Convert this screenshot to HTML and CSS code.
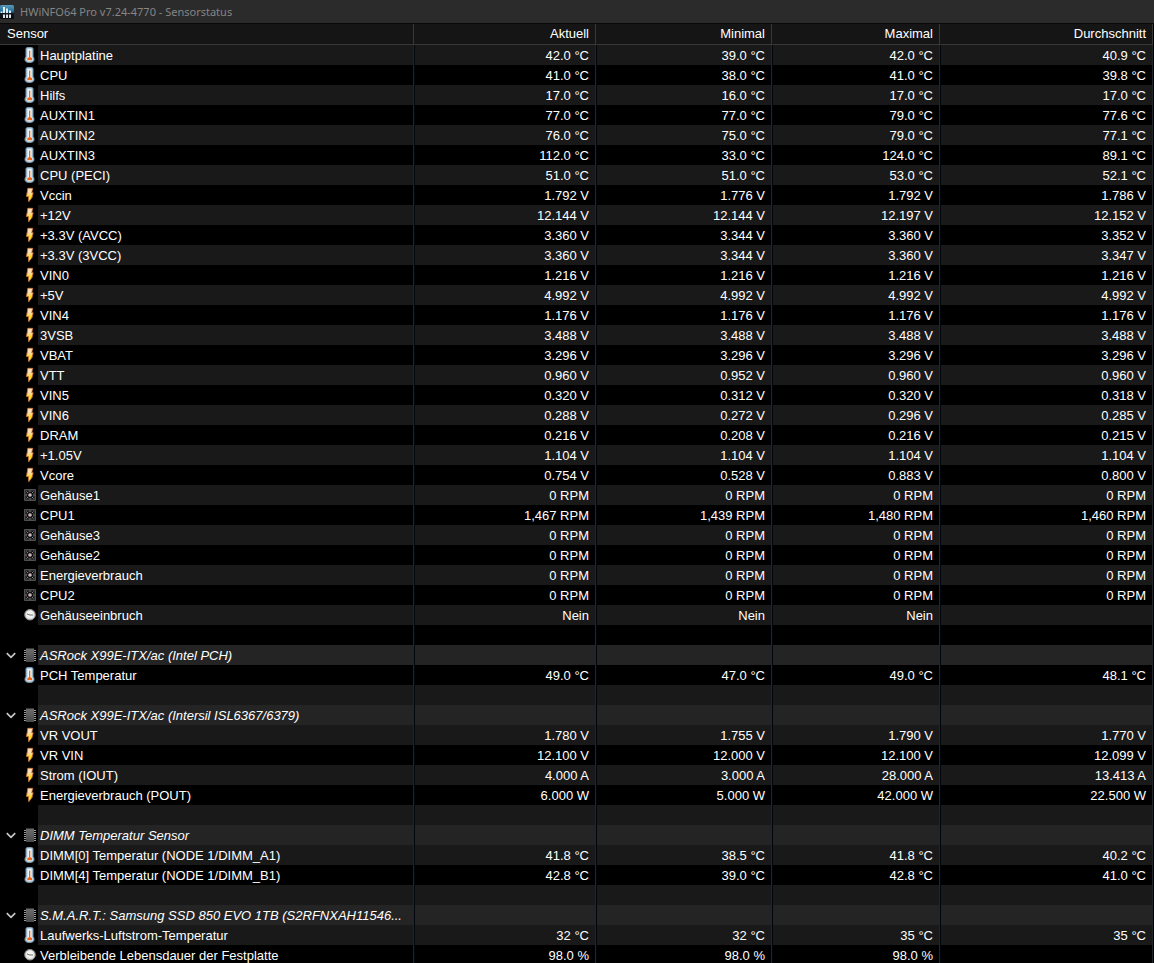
FILE: index.html
```html
<!DOCTYPE html>
<html lang="de">
<head>
<meta charset="utf-8">
<title>HWiNFO64 Pro v7.24-4770 - Sensorstatus</title>
<link rel="stylesheet" href="styles.css">
</head>
<body>
<svg class="defs" aria-hidden="true">
<defs>
<linearGradient id="boltfill" x1="0" y1="0" x2="0" y2="1"><stop offset="0" stop-color="#ffe2c0"/><stop offset=".4" stop-color="#ffd9a0"/><stop offset=".6" stop-color="#ffd92a"/><stop offset=".8" stop-color="#fff010"/><stop offset="1" stop-color="#f0a010"/></linearGradient>
<linearGradient id="chipfill" x1="0" y1="0" x2="0" y2="1"><stop offset="0" stop-color="#6e6e6e"/><stop offset="1" stop-color="#484848"/></linearGradient>
<linearGradient id="logofill" x1="0" y1="0" x2="0" y2="1"><stop offset="0" stop-color="#5a9cba"/><stop offset=".5" stop-color="#1b6a98"/><stop offset=".58" stop-color="#101a22"/><stop offset="1" stop-color="#05080b"/></linearGradient>
<symbol id="temp" viewBox="0 0 16 16"><path d="M4 2Q4 .5 5.500 .5H9.500Q11 .5 11 2V9.500Q12 10.500 12 12.500Q12 15.500 7.500 15.500T3 12.500Q3 10.500 4 9.500Z" fill="#a9cde4" stroke="#7f98a8"/><path d="M5.500 2H9.500V10.300Q10.500 11 10.500 12.500Q10 14.300 7.500 14.300T4.500 12.500Q4.500 11 5.500 10.300Z" fill="#eef8ff"/><path d="M7 3.500H8.300V10.200L10 11V13.300H5.300V11L7 10.200Z" fill="#f7640f"/></symbol>
<symbol id="bolt" viewBox="0 0 16 16"><path d="M5.800 1.300H10.700L9.700 5.800H11.200L10 10H10.300L6.700 14.800L6.500 9.500H4.400L5.300 5Z" fill="url(#boltfill)" stroke="#d07838" stroke-width=".8"/></symbol>
<symbol id="fan" viewBox="0 0 16 16"><path d="M2.500 2.500H13.500V13.500H2.500Z" fill="#303030" stroke="#505050"/><path d="M8 3V13M3 8H13M4.500 4.500L11.500 11.500M11.500 4.500L4.500 11.500" stroke="#111" stroke-width="2"/><path d="M8 3V5M8 11V13M3 8H5M11 8H13M4.500 4.500L6 6M10 10L11.500 11.500M11.500 4.500L10 6M6 10L4.500 11.500" stroke="#858585"/><circle cx="8" cy="8" r="1.800" fill="#c9b5b5"/></symbol>
<symbol id="clock" viewBox="0 0 16 16"><circle cx="8" cy="7.700" r="5.300" fill="#d9d9d7" stroke="#8c8c8c"/><circle cx="8" cy="7.500" r="3.800" fill="#f1f1ef"/><path d="M5 7L8 8H11" fill="none" stroke="#77706e"/></symbol>
<symbol id="chip" viewBox="0 0 16 16"><path d="M2 3.500H14M2 5.500H14M2 7.500H14M2 9.500H14M2 11.500H14M2 13.500H14" stroke="#9a9a9a" stroke-width="1"/><path d="M4 1.500H12V15H4Z" fill="url(#chipfill)"/></symbol>
</defs>
</svg>
<main class="window">
<header class="titlebar">
<svg class="logo" viewBox="0 0 14 14" aria-hidden="true"><rect width="14" height="14" rx="1.500" fill="url(#logofill)"/><path d="M4 2V8M7 3.500V8M10 5.500V8M1.500 6.500V8M4 9.500V13M7 9.500V13M10 9.500V13" stroke="#f2fbff" stroke-width="1.800"/></svg>
<h1 class="caption">HWiNFO64 Pro v7.24-4770 - Sensorstatus</h1>
</header>
<table class="sensors">
<colgroup><col class="c-icon"><col><col class="c-current"><col class="c-min"><col class="c-max"><col class="c-avg"></colgroup>
<thead><tr><th colspan="2" class="first">Sensor</th><th>Aktuell</th><th>Minimal</th><th>Maximal</th><th>Durchschnitt</th></tr></thead>
<tbody>
<tr><td><svg class="icon"><use href="#temp"/></svg></td><td>Hauptplatine</td><td>42.0 °C</td><td>39.0 °C</td><td>42.0 °C</td><td>40.9 °C</td></tr>
<tr><td><svg class="icon"><use href="#temp"/></svg></td><td>CPU</td><td>41.0 °C</td><td>38.0 °C</td><td>41.0 °C</td><td>39.8 °C</td></tr>
<tr><td><svg class="icon"><use href="#temp"/></svg></td><td>Hilfs</td><td>17.0 °C</td><td>16.0 °C</td><td>17.0 °C</td><td>17.0 °C</td></tr>
<tr><td><svg class="icon"><use href="#temp"/></svg></td><td>AUXTIN1</td><td>77.0 °C</td><td>77.0 °C</td><td>79.0 °C</td><td>77.6 °C</td></tr>
<tr><td><svg class="icon"><use href="#temp"/></svg></td><td>AUXTIN2</td><td>76.0 °C</td><td>75.0 °C</td><td>79.0 °C</td><td>77.1 °C</td></tr>
<tr><td><svg class="icon"><use href="#temp"/></svg></td><td>AUXTIN3</td><td>112.0 °C</td><td>33.0 °C</td><td>124.0 °C</td><td>89.1 °C</td></tr>
<tr><td><svg class="icon"><use href="#temp"/></svg></td><td>CPU (PECI)</td><td>51.0 °C</td><td>51.0 °C</td><td>53.0 °C</td><td>52.1 °C</td></tr>
<tr><td><svg class="icon"><use href="#bolt"/></svg></td><td>Vccin</td><td>1.792 V</td><td>1.776 V</td><td>1.792 V</td><td>1.786 V</td></tr>
<tr><td><svg class="icon"><use href="#bolt"/></svg></td><td>+12V</td><td>12.144 V</td><td>12.144 V</td><td>12.197 V</td><td>12.152 V</td></tr>
<tr><td><svg class="icon"><use href="#bolt"/></svg></td><td>+3.3V (AVCC)</td><td>3.360 V</td><td>3.344 V</td><td>3.360 V</td><td>3.352 V</td></tr>
<tr><td><svg class="icon"><use href="#bolt"/></svg></td><td>+3.3V (3VCC)</td><td>3.360 V</td><td>3.344 V</td><td>3.360 V</td><td>3.347 V</td></tr>
<tr><td><svg class="icon"><use href="#bolt"/></svg></td><td>VIN0</td><td>1.216 V</td><td>1.216 V</td><td>1.216 V</td><td>1.216 V</td></tr>
<tr><td><svg class="icon"><use href="#bolt"/></svg></td><td>+5V</td><td>4.992 V</td><td>4.992 V</td><td>4.992 V</td><td>4.992 V</td></tr>
<tr><td><svg class="icon"><use href="#bolt"/></svg></td><td>VIN4</td><td>1.176 V</td><td>1.176 V</td><td>1.176 V</td><td>1.176 V</td></tr>
<tr><td><svg class="icon"><use href="#bolt"/></svg></td><td>3VSB</td><td>3.488 V</td><td>3.488 V</td><td>3.488 V</td><td>3.488 V</td></tr>
<tr><td><svg class="icon"><use href="#bolt"/></svg></td><td>VBAT</td><td>3.296 V</td><td>3.296 V</td><td>3.296 V</td><td>3.296 V</td></tr>
<tr><td><svg class="icon"><use href="#bolt"/></svg></td><td>VTT</td><td>0.960 V</td><td>0.952 V</td><td>0.960 V</td><td>0.960 V</td></tr>
<tr><td><svg class="icon"><use href="#bolt"/></svg></td><td>VIN5</td><td>0.320 V</td><td>0.312 V</td><td>0.320 V</td><td>0.318 V</td></tr>
<tr><td><svg class="icon"><use href="#bolt"/></svg></td><td>VIN6</td><td>0.288 V</td><td>0.272 V</td><td>0.296 V</td><td>0.285 V</td></tr>
<tr><td><svg class="icon"><use href="#bolt"/></svg></td><td>DRAM</td><td>0.216 V</td><td>0.208 V</td><td>0.216 V</td><td>0.215 V</td></tr>
<tr><td><svg class="icon"><use href="#bolt"/></svg></td><td>+1.05V</td><td>1.104 V</td><td>1.104 V</td><td>1.104 V</td><td>1.104 V</td></tr>
<tr><td><svg class="icon"><use href="#bolt"/></svg></td><td>Vcore</td><td>0.754 V</td><td>0.528 V</td><td>0.883 V</td><td>0.800 V</td></tr>
<tr><td><svg class="icon"><use href="#fan"/></svg></td><td>Gehäuse1</td><td>0 RPM</td><td>0 RPM</td><td>0 RPM</td><td>0 RPM</td></tr>
<tr><td><svg class="icon"><use href="#fan"/></svg></td><td>CPU1</td><td>1,467 RPM</td><td>1,439 RPM</td><td>1,480 RPM</td><td>1,460 RPM</td></tr>
<tr><td><svg class="icon"><use href="#fan"/></svg></td><td>Gehäuse3</td><td>0 RPM</td><td>0 RPM</td><td>0 RPM</td><td>0 RPM</td></tr>
<tr><td><svg class="icon"><use href="#fan"/></svg></td><td>Gehäuse2</td><td>0 RPM</td><td>0 RPM</td><td>0 RPM</td><td>0 RPM</td></tr>
<tr><td><svg class="icon"><use href="#fan"/></svg></td><td>Energieverbrauch</td><td>0 RPM</td><td>0 RPM</td><td>0 RPM</td><td>0 RPM</td></tr>
<tr><td><svg class="icon"><use href="#fan"/></svg></td><td>CPU2</td><td>0 RPM</td><td>0 RPM</td><td>0 RPM</td><td>0 RPM</td></tr>
<tr><td><svg class="icon"><use href="#clock"/></svg></td><td>Gehäuseeinbruch</td><td>Nein</td><td>Nein</td><td>Nein</td><td></td></tr>
<tr><td></td><td></td><td></td><td></td><td></td><td></td></tr>
<tr class="group"><td><div class="tools"><button class="toggle" aria-label="Intel PCH einklappen"><svg class="chevron" viewBox="0 0 9 6"><path d="M.7 .8L4.500 4.600L8.300 .8"/></svg></button><svg class="icon"><use href="#chip"/></svg></div></td><td>ASRock X99E-ITX/ac (Intel PCH)</td><td></td><td></td><td></td><td></td></tr>
<tr><td><svg class="icon"><use href="#temp"/></svg></td><td>PCH Temperatur</td><td>49.0 °C</td><td>47.0 °C</td><td>49.0 °C</td><td>48.1 °C</td></tr>
<tr><td></td><td></td><td></td><td></td><td></td><td></td></tr>
<tr class="group"><td><div class="tools"><button class="toggle" aria-label="Intersil einklappen"><svg class="chevron" viewBox="0 0 9 6"><path d="M.7 .8L4.500 4.600L8.300 .8"/></svg></button><svg class="icon"><use href="#chip"/></svg></div></td><td>ASRock X99E-ITX/ac (Intersil ISL6367/6379)</td><td></td><td></td><td></td><td></td></tr>
<tr><td><svg class="icon"><use href="#bolt"/></svg></td><td>VR VOUT</td><td>1.780 V</td><td>1.755 V</td><td>1.790 V</td><td>1.770 V</td></tr>
<tr><td><svg class="icon"><use href="#bolt"/></svg></td><td>VR VIN</td><td>12.100 V</td><td>12.000 V</td><td>12.100 V</td><td>12.099 V</td></tr>
<tr><td><svg class="icon"><use href="#bolt"/></svg></td><td>Strom (IOUT)</td><td>4.000 A</td><td>3.000 A</td><td>28.000 A</td><td>13.413 A</td></tr>
<tr><td><svg class="icon"><use href="#bolt"/></svg></td><td>Energieverbrauch (POUT)</td><td>6.000 W</td><td>5.000 W</td><td>42.000 W</td><td>22.500 W</td></tr>
<tr><td></td><td></td><td></td><td></td><td></td><td></td></tr>
<tr class="group"><td><div class="tools"><button class="toggle" aria-label="DIMM einklappen"><svg class="chevron" viewBox="0 0 9 6"><path d="M.7 .8L4.500 4.600L8.300 .8"/></svg></button><svg class="icon"><use href="#chip"/></svg></div></td><td>DIMM Temperatur Sensor</td><td></td><td></td><td></td><td></td></tr>
<tr><td><svg class="icon"><use href="#temp"/></svg></td><td>DIMM[0] Temperatur (NODE 1/DIMM_A1)</td><td>41.8 °C</td><td>38.5 °C</td><td>41.8 °C</td><td>40.2 °C</td></tr>
<tr><td><svg class="icon"><use href="#temp"/></svg></td><td>DIMM[4] Temperatur (NODE 1/DIMM_B1)</td><td>42.8 °C</td><td>39.0 °C</td><td>42.8 °C</td><td>41.0 °C</td></tr>
<tr><td></td><td></td><td></td><td></td><td></td><td></td></tr>
<tr class="group"><td><div class="tools"><button class="toggle" aria-label="S.M.A.R.T. einklappen"><svg class="chevron" viewBox="0 0 9 6"><path d="M.7 .8L4.500 4.600L8.300 .8"/></svg></button><svg class="icon"><use href="#chip"/></svg></div></td><td>S.M.A.R.T.: Samsung SSD 850 EVO 1TB (S2RFNXAH11546...</td><td></td><td></td><td></td><td></td></tr>
<tr><td><svg class="icon"><use href="#temp"/></svg></td><td>Laufwerks-Luftstrom-Temperatur</td><td>32 °C</td><td>32 °C</td><td>35 °C</td><td>35 °C</td></tr>
<tr><td><svg class="icon"><use href="#clock"/></svg></td><td>Verbleibende Lebensdauer der Festplatte</td><td>98.0 %</td><td>98.0 %</td><td>98.0 %</td><td></td></tr>
</tbody>
</table>
</main>
</body>
</html>
```
FILE: styles.css
```css
* { box-sizing: border-box; }
body {
  margin: 0;
  background: #000;
  color: #fff;
  font: 13px/18px "Liberation Sans", Arial, sans-serif;
}
.defs { position: absolute; width: 0; height: 0; }
.window { height: 100vh; overflow: hidden; padding-right: 1px; }
.titlebar {
  display: flex;
  align-items: center;
  gap: 6px;
  height: 24px;
  margin-right: -1px;
  background: #2b2b2b;
  border-bottom: 1px solid #080808;
}
.logo { width: 14px; height: 14px; }
.caption {
  margin: 0;
  color: #858585;
  font: 11px/22px "Noto Sans", "Open Sans", sans-serif;
}
.sensors {
  width: 100%;
  table-layout: fixed;
  border-collapse: separate;
  border-spacing: 0;
}
.c-icon { width: 38px; }
.c-current { width: 182px; }
.c-min { width: 176px; }
.c-max { width: 168px; }
.c-avg { width: 213px; }
th {
  height: 21px;
  padding: 0 6px 0 0;
  background: #151515;
  border-right: 1px solid #383838;
  border-bottom: 1px solid #383838;
  font-weight: 400;
  text-align: right;
}
th.first { padding-left: 7px; text-align: left; }
td {
  height: 20px;
  padding: 2px 6px 0 0;
  border-right: 1px solid #20242c;
  text-align: right;
  white-space: nowrap;
}
td:first-child { padding: 0; border-right: 0; }
td:nth-child(2) {
  padding: 2px 0 0 2px;
  overflow: hidden;
  text-align: left;
}
td:nth-child(n+3) { box-shadow: inset 1px 0 #02060f; }
tr:nth-child(odd) td:nth-child(n+2) { background: #191919; }
tr.group td:nth-child(n+2) { background: #242424; }
tr.group td { font-style: italic; }
.icon {
  display: block;
  width: 16px;
  height: 16px;
  margin-left: auto;
}
.tools { display: flex; align-items: center; }
.toggle {
  display: flex;
  padding: 6px;
  border: 0;
  background: none;
}
.chevron {
  width: 10px;
  height: 7px;
  fill: none;
  stroke: #c8c8c8;
  stroke-width: 1.5;
}
```
